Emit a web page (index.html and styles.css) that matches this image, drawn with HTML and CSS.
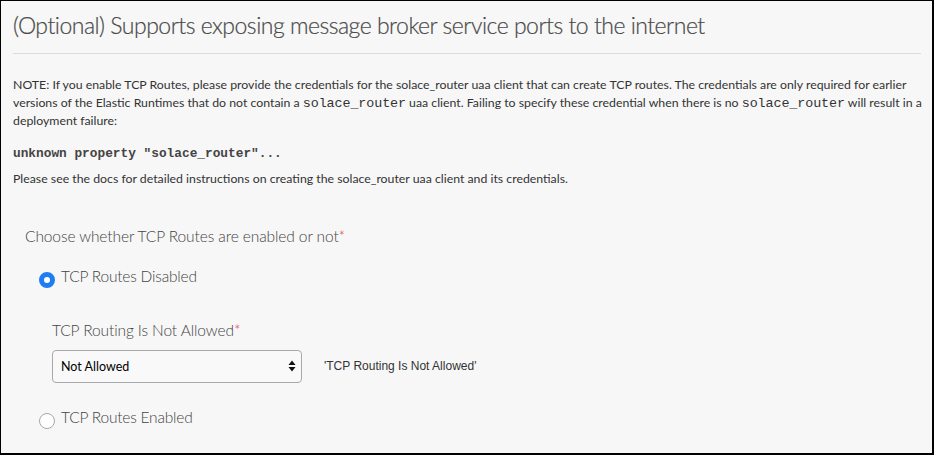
FILE: index.html
```html
<!DOCTYPE html>
<html>
<head>
<meta charset="utf-8">
<link rel="stylesheet" href="styles.css">
</head>
<body>
<div class="panel">
  <h1 class="title">(Optional) Supports exposing message broker service ports to the internet</h1>
  <hr class="rule">
  <p class="note">NOTE: If you enable TCP Routes, please provide the credentials for the solace_router uaa client that can create TCP routes. The credentials are only required for earlier<br>versions of the Elastic Runtimes that do not contain a <code class="mono">solace_router</code> uaa client. Failing to specify these credential when there is no <code class="mono">solace_router</code> will result in a<br>deployment failure:</p>
  <p class="code-line"><code class="mono">unknown property "solace_router"...</code></p>
  <p class="note">Please see the docs for detailed instructions on creating the solace_router uaa client and its credentials.</p>
  <div class="form">
    <div class="group-label">Choose whether TCP Routes are enabled or not<span class="req">*</span></div>
    <div class="option">
      <span class="radio checked"></span>
      <span class="option-label">TCP Routes Disabled</span>
    </div>
    <div class="sub">
      <div class="field-label">TCP Routing Is Not Allowed<span class="req">*</span></div>
      <div class="field-row">
        <div class="select">
          <span class="select-text">Not Allowed</span>
          <svg class="arrows" width="8" height="12" viewBox="0 0 8 12"><path d="M4 0.5 L7.5 5 H0.5 Z" fill="#111"/><path d="M4 11.5 L7.5 7 H0.5 Z" fill="#111"/></svg>
        </div>
        <span class="help">'TCP Routing Is Not Allowed'</span>
      </div>
    </div>
    <div class="option second">
      <span class="radio"></span>
      <span class="option-label">TCP Routes Enabled</span>
    </div>
  </div>
</div>
</body>
</html>
```
FILE: styles.css
```css
html, body {
  margin: 0;
  padding: 0;
  background: #f7f7f7;
}
.panel {
  box-sizing: border-box;
  width: 934px;
  height: 455px;
  border-left: 1px solid #000;
  border-top: 1px solid #000;
  border-right: 2px solid #000;
  border-bottom: 2px solid #000;
  background: #f7f7f7;
  padding: 0 11px 0 12px;
  font-family: Lato, "Noto Sans", sans-serif;
  color: #333;
  overflow: hidden;
}
.title {
  margin: 0;
  padding-top: 9px;
  font-size: 23px;
  font-weight: 300;
  color: #4a4a4a;
  line-height: 30px;
  letter-spacing: -0.5px;
  -webkit-text-stroke: 0.2px #4a4a4a;
}
.rule {
  border: 0;
  border-top: 1px solid #dcdcdc;
  margin: 13px 0 0 0;
}
.note {
  margin: 0;
  font-size: 12.3px;
  line-height: 18px;
  color: #333;
  white-space: nowrap;
}
.rule + .note { margin-top: 22px; }
.mono {
  font-family: "Liberation Mono", monospace;
  font-size: 13.4px;
  line-height: 1;
}
.note .mono {
  letter-spacing: -0.1px;
}
.code-line {
  margin: 12px 0 9px 0;
  line-height: 18px;
}
.code-line .mono {
  font-size: 12.8px;
  font-weight: bold;
  color: #444;
}
.form {
  padding-left: 12px;
  margin-top: 38px;
}
.group-label {
  font-size: 15.5px;
  font-weight: 300;
  color: #444;
  line-height: 20px;
  letter-spacing: -0.1px;
}
.req { color: #e0393e; }
.option {
  display: flex;
  align-items: flex-start;
  margin-top: 20px;
  padding-left: 14px;
}
.option.second { margin-top: 24px; }
.radio {
  box-sizing: border-box;
  width: 16px;
  height: 16px;
  border-radius: 50%;
  border: 1px solid #a8a8a8;
  background: #fff;
  margin-top: 6px;
  margin-right: 6px;
}
.radio.checked {
  border: 5px solid #1f7cf3;
  background: #fff;
}
.option-label {
  font-size: 15.5px;
  font-weight: 300;
  color: #444;
  line-height: 20px;
  letter-spacing: -0.2px;
}
.sub {
  padding-left: 27px;
  margin-top: 32px;
}
.field-label {
  font-size: 15.5px;
  font-weight: 300;
  color: #444;
  line-height: 20px;
  letter-spacing: -0.1px;
}
.field-row {
  display: flex;
  align-items: center;
  margin-top: 10px;
}
.select {
  box-sizing: border-box;
  width: 250px;
  height: 33px;
  border: 1px solid #a9a9a9;
  border-radius: 4px;
  background: #f9f9f9;
  display: flex;
  align-items: center;
  justify-content: space-between;
  padding: 0 5px 0 8px;
}
.select-text {
  font-size: 12.5px;
  color: #000;
  font-weight: 400;
}
.help {
  margin-left: 22px;
  font-family: "Liberation Sans", Arial, sans-serif;
  font-size: 12px;
  color: #333;
}
```
